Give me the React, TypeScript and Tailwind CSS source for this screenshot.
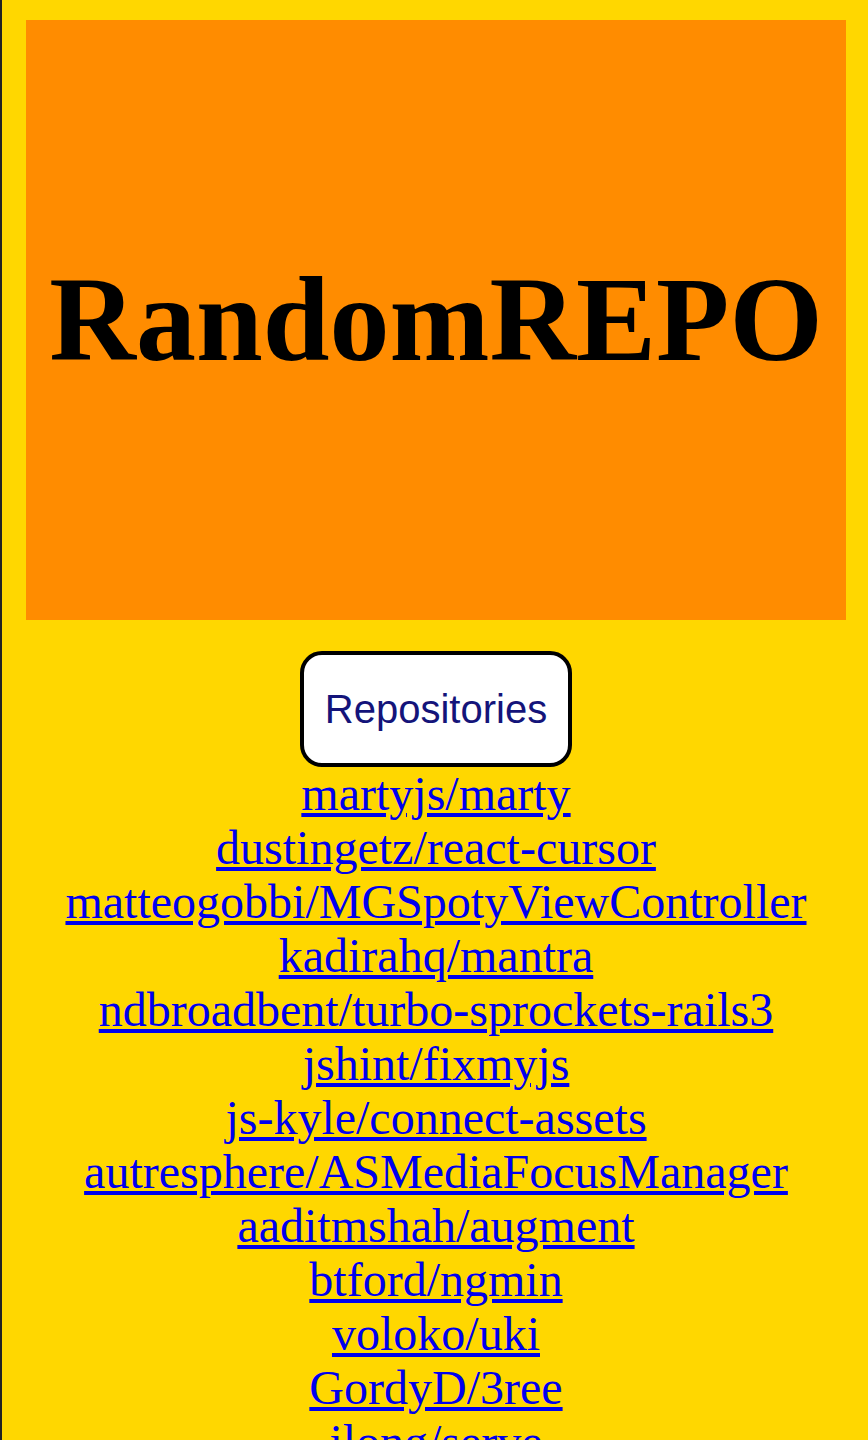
const repos = [
  "martyjs/marty",
  "dustingetz/react-cursor",
  "matteogobbi/MGSpotyViewController",
  "kadirahq/mantra",
  "ndbroadbent/turbo-sprockets-rails3",
  "jshint/fixmyjs",
  "js-kyle/connect-assets",
  "autresphere/ASMediaFocusManager",
  "aaditmshah/augment",
  "btford/ngmin",
  "voloko/uki",
  "GordyD/3ree",
  "jlong/serve",
  "mbostock/d3",
];

export default function App() {
  return (
    <div className="min-h-screen bg-[#ffd700] border-l-2 border-[#222222] pb-10">
      {/* Header box */}
      <header className="ml-6 mr-[22px] pt-5">
        <div className="h-[600px] bg-[#ff8c00] flex items-center justify-center">
          <h1 className="text-[120px] font-bold text-black font-['Liberation_Serif','Times_New_Roman',serif] leading-none">
            RandomREPO
          </h1>
        </div>
      </header>

      <main className="ml-6 mr-[22px] mt-[31px] flex flex-col items-center">
        <button className="bg-white border-4 border-black rounded-[22px] px-[21px] py-[31px] text-[40px] leading-[46px] text-[#14147a] font-['Liberation_Sans',Arial,sans-serif]">
          Repositories
        </button>

        <ul className="flex flex-col items-center text-center">
          {repos.map((repo) => (
            <li key={repo}>
              <a
                href="#"
                className="text-[48px] leading-[54px] text-[#0000ee] underline font-['Liberation_Serif','Times_New_Roman',serif]"
              >
                {repo}
              </a>
            </li>
          ))}
        </ul>
      </main>
    </div>
  );
}
